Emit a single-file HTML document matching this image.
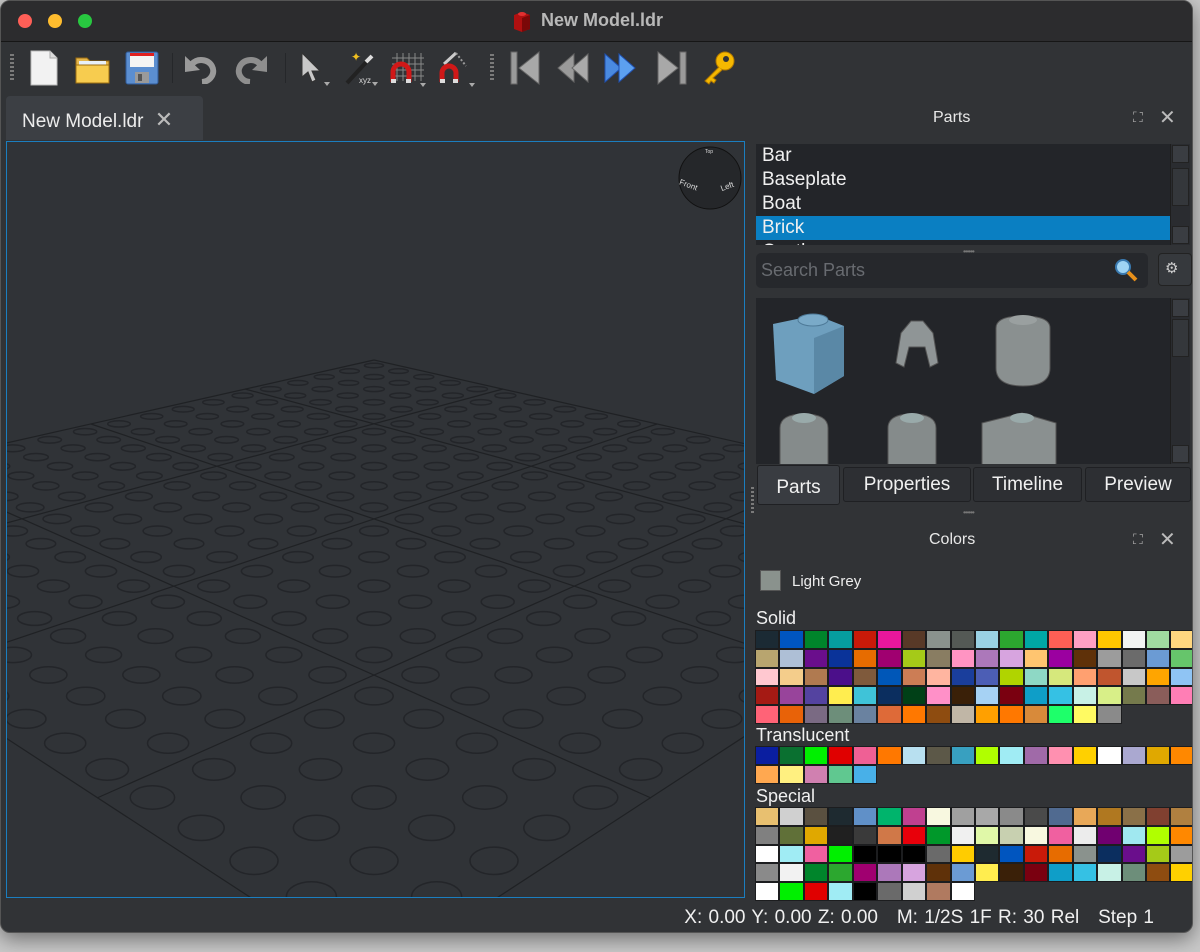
<!DOCTYPE html>
<html><head><meta charset="utf-8"><style>
*{margin:0;padding:0;box-sizing:border-box}
body{width:1200px;height:952px;background:#c9c9c9;font-family:"Liberation Sans",sans-serif;position:relative;overflow:hidden}
.win{position:absolute;left:0;top:0;width:1193px;height:933px;background:#313336;border-radius:10px;overflow:hidden;box-shadow:0 6px 20px rgba(0,0,0,.45);border:1px solid #555}
.abs{position:absolute}
.title{left:0;top:0;width:1193px;height:41px;background:#2c2c2e;border-bottom:1px solid #161616}
.tl{width:14px;height:14px;border-radius:50%;top:13px}
.ttext{left:540px;top:9px;font-size:18px;font-weight:bold;color:#b8b8b8}
.grip{width:4px;background:repeating-linear-gradient(#7a7a7a 0 2px,transparent 2px 4px)}
.tab{left:5px;top:95px;width:197px;height:44px;background:#3c3f44;border-radius:4px 4px 0 0;color:#ececec;font-size:19px;padding:11px 0 0 16px}
.vp{left:5px;top:140px;width:739px;height:757px;border:1px solid #1b7ebf;background:#303337;overflow:hidden}
.hdr{color:#e8e8e8;font-size:16px}
.list{left:755px;top:143px;width:414px;height:101px;background:#232529;overflow:hidden}
.list div{height:24px;font-size:19px;color:#f0f0f0;padding-left:6px;line-height:23px}
.sb{background:#2a2c30;border-left:1px solid #1e1e1e}
.sbb{position:absolute;left:1px;width:17px;height:18px;background:#3a3d42;border:1px solid #222}
.search{left:755px;top:252px;width:392px;height:35px;background:#26282c;border-radius:5px;color:#686b70;font-size:18px;padding:7px 0 0 5px}
.prev{left:755px;top:297px;width:414px;height:166px;background:#232529;overflow:hidden}
.ptab{top:466px;height:35px;background:#2d2f33;border:1px solid #1f2023;color:#f0f0f0;font-size:19px;text-align:center;padding-top:6px;border-radius:3px}
.grid{display:grid;grid-template-columns:repeat(18,24.45px);grid-auto-rows:18.8px;left:754px}
.grid i{display:block;border:1px solid #1c1d1f}
.lbl{left:755px;font-size:18px;color:#f0f0f0}
.status{right:38px;top:906px;font-size:19px;color:#f0f0f0;word-spacing:1px}
</style></head><body>
<div class="win">
<div class="abs title">
 <div class="abs tl" style="left:17px;background:#fe5f57"></div>
 <div class="abs tl" style="left:47px;background:#febc2e"></div>
 <div class="abs tl" style="left:77px;background:#28c840"></div>
 <svg class="abs" style="left:511px;top:8px" width="20" height="24"><polygon points="2,6 10,3 18,6 18,20 10,23 2,20" fill="#b01010"/><polygon points="10,9 18,6 18,20 10,23" fill="#7a0808"/><ellipse cx="10" cy="5" rx="4" ry="2" fill="#e03030"/></svg>
 <div class="abs ttext">New Model.ldr</div>
</div>
<div class="abs grip" style="left:9px;top:53px;height:26px"></div>
<svg class="abs" style="left:28px;top:49px" width="30" height="36"><path d="M2 1h19l7 7v27H2z" fill="#f2f2f2" stroke="#bbb"/><path d="M21 1v7h7" fill="#ddd" stroke="#aaa"/></svg>
<svg class="abs" style="left:74px;top:53px" width="36" height="30"><path d="M1 4h11l3 3h19v22H1z" fill="#e4b64c" stroke="#9a6b10"/><rect x="4" y="7" width="27" height="4" fill="#e8f0f8"/><rect x="1" y="11" width="33" height="18" fill="#f7cc4f" stroke="#a07010"/></svg>
<svg class="abs" style="left:124px;top:50px" width="34" height="34"><rect x="1" y="1" width="32" height="32" rx="2" fill="#5b8ed0" stroke="#2f5b99"/><rect x="5" y="2" width="24" height="14" fill="#f4f4f4"/><rect x="5" y="2" width="24" height="3" fill="#e02020"/><rect x="10" y="21" width="14" height="11" fill="#9a9a9a"/><rect x="13" y="23" width="4" height="7" fill="#555"/></svg>
<div class="abs" style="left:171px;top:52px;width:1px;height:30px;background:#25272a"></div>
<svg class="abs" style="left:183px;top:51px" width="36" height="32"><path d="M8 12 A12 11 0 1 1 18 30" fill="none" stroke="#9a9a9a" stroke-width="6"/><polygon points="1,4 1,20 16,18" fill="#9a9a9a"/></svg>
<svg class="abs" style="left:231px;top:51px" width="36" height="32"><path d="M28 12 A12 11 0 1 0 18 30" fill="none" stroke="#8e8e8e" stroke-width="6"/><polygon points="35,4 35,20 20,18" fill="#8e8e8e"/></svg>
<div class="abs" style="left:284px;top:52px;width:1px;height:30px;background:#25272a"></div>
<svg class="abs" style="left:298px;top:50px" width="34" height="36"><path d="M3 2 L3 26 L9 21 L13 31 L17 29 L13 20 L21 20 Z" fill="#c8c8c8" stroke="#333"/><polygon points="25,31 31,31 28,35" fill="#aaa"/></svg>
<svg class="abs" style="left:340px;top:48px" width="40" height="38"><line x1="6" y1="34" x2="30" y2="8" stroke="#222" stroke-width="4"/><line x1="25" y1="13" x2="31" y2="7" stroke="#ddd" stroke-width="4"/><text x="10" y="12" font-size="12" fill="#f0c020">✦</text><text x="18" y="34" font-size="8" fill="#ddd" font-family="Liberation Sans">xyz</text><polygon points="31,33 37,33 34,37" fill="#aaa"/></svg>
<svg class="abs" style="left:388px;top:49px" width="40" height="38"><g stroke="#888" stroke-width="1"><path d="M8 3v28M14 3v28M20 3v28M26 3v28M32 3v28M3 8h32M3 14h32M3 20h32M3 26h32"/></g><path d="M4 32 V22 A8 8 0 0 1 20 22 V32" fill="none" stroke="#d01818" stroke-width="5"/><rect x="2" y="29" width="5" height="4" fill="#ddd"/><rect x="17" y="29" width="5" height="4" fill="#ddd"/><polygon points="31,33 37,33 34,37" fill="#aaa"/></svg>
<svg class="abs" style="left:437px;top:49px" width="40" height="38"><path d="M18 3 L6 14" stroke="#ccc" stroke-width="3"/><path d="M18 3 L28 16" stroke="#999" stroke-width="2" stroke-dasharray="2 2"/><path d="M4 32 V23 A7 7 0 0 1 18 23 V32" fill="none" stroke="#d01818" stroke-width="5"/><rect x="2" y="29" width="5" height="4" fill="#ddd"/><rect x="15" y="29" width="5" height="4" fill="#ddd"/><polygon points="31,33 37,33 34,37" fill="#aaa"/></svg>
<div class="abs grip" style="left:489px;top:53px;height:26px"></div>
<svg class="abs" style="left:508px;top:49px" width="32" height="36"><rect x="2" y="2" width="6" height="32" fill="#9a9a9a" stroke="#666"/><polygon points="30,2 10,18 30,34" fill="#a8a8a8" stroke="#666"/></svg>
<svg class="abs" style="left:555px;top:49px" width="34" height="36"><polygon points="18,4 2,18 18,32" fill="#9a9a9a" stroke="#666"/><polygon points="32,4 16,18 32,32" fill="#aaa" stroke="#666"/></svg>
<svg class="abs" style="left:602px;top:49px" width="34" height="36"><polygon points="2,4 18,18 2,32" fill="#4a8ae0" stroke="#2050b0"/><polygon points="16,4 32,18 16,32" fill="#5ca0f0" stroke="#2050b0"/></svg>
<svg class="abs" style="left:655px;top:49px" width="32" height="36"><polygon points="2,2 22,18 2,34" fill="#a8a8a8" stroke="#666"/><rect x="24" y="2" width="6" height="32" fill="#9a9a9a" stroke="#666"/></svg>
<svg class="abs" style="left:700px;top:49px" width="36" height="36"><circle cx="24" cy="11" r="9" fill="#f5b800" stroke="#b07800"/><circle cx="25" cy="9" r="3" fill="#313336"/><path d="M18 17 L4 31 L8 34 L10 31 L13 33 L15 30 L12 28 L21 20" fill="#f5b800" stroke="#b07800"/></svg>
<div class="abs tab">New Model.ldr <span style="color:#bbb;margin-left:6px;font-size:22px">✕</span></div>
<div class="abs vp">
<svg id="floor" width="739" height="757" viewBox="5 140 739 757" style="position:absolute;left:-1px;top:-1px">
<g id="studs" fill="none" stroke="#232529" stroke-width="1.5"></g>
<g stroke="#1f2124" stroke-width="1.2">
<line x1="373" y1="359" x2="-331" y2="518"/><line x1="502" y1="388" x2="-228" y2="585"/><line x1="656" y1="423" x2="-92" y2="674"/><line x1="844" y1="465" x2="96" y2="797"/><line x1="1077" y1="518" x2="373" y2="977"/>
<line x1="373" y1="359" x2="1077" y2="518"/><line x1="244" y1="388" x2="974" y2="585"/><line x1="90" y1="423" x2="838" y2="674"/><line x1="-98" y1="465" x2="650" y2="797"/><line x1="-331" y1="518" x2="373" y2="977"/>
</g>
<circle cx="709" cy="177" r="31" fill="#25272a" stroke="#111" stroke-width="1"/>
<text x="678" y="186" font-size="8" fill="#ddd" transform="rotate(20 686 184)">Front</text>
<text x="719" y="188" font-size="8" fill="#ddd" transform="rotate(-20 726 184)">Left</text>
<text x="704" y="152" font-size="5" fill="#ddd">Top</text>
</svg>
</div>
<div class="abs hdr" style="left:932px;top:108px">Parts</div>
<div class="abs" style="left:1132px;top:108px;color:#aaa;font-size:14px">⛶</div>
<div class="abs" style="left:1158px;top:104px;color:#bbb;font-size:20px">✕</div>
<div class="abs list"><div>Bar</div><div>Baseplate</div><div>Boat</div><div style="background:#0a7fc2">Brick</div><div>Castle</div></div>
<div class="abs sb" style="left:1169px;top:143px;width:20px;height:101px"><div class="sbb" style="top:1px"></div><div class="sbb" style="top:24px;height:38px;background:#34373b"></div><div class="sbb" style="top:82px"></div></div>
<div class="abs" style="left:962px;top:246px;color:#777;font-size:8px;letter-spacing:-1px">••••••</div>
<div class="abs search">Search Parts</div>
<svg class="abs" style="left:1112px;top:256px" width="26" height="26"><circle cx="10" cy="10" r="7" fill="#9fd4f4" stroke="#3a7ab0" stroke-width="2"/><line x1="15" y1="15" x2="23" y2="23" stroke="#e8901a" stroke-width="4"/></svg>
<div class="abs" style="left:1157px;top:252px;width:34px;height:33px;background:#36393d;border:1px solid #222;border-radius:4px;color:#ccc;font-size:15px;padding:5px 0 0 6px">⚙</div>
<div class="abs prev">
<svg width="414" height="166">
<polygon points="17,26 60,17 88,28 88,78 58,96 20,82" fill="#6e9fbe"/><polygon points="58,40 88,28 88,78 58,96" fill="#5a88a6"/><ellipse cx="57" cy="22" rx="15" ry="6" fill="#7aaac8" stroke="#4e7a98"/>
<path d="M145 35 l10 -12 h12 l10 12 l5 30 l-8 4 l-5 -20 h-16 l-5 20 l-8 -4z" fill="#8f9596" stroke="#555"/>
<path d="M240 30 q0 -12 27 -12 q27 0 27 12 v40 q0 18 -27 18 q-27 0 -27 -18z" fill="#8a9090" stroke="#555"/><ellipse cx="267" cy="22" rx="14" ry="5" fill="#9aa0a0"/>
<path d="M24 130 q0 -14 24 -14 q24 0 24 14 v40 h-48z" fill="#858b8b" stroke="#555"/><ellipse cx="48" cy="120" rx="12" ry="5" fill="#9aa"/>
<path d="M132 130 q0 -14 24 -14 q24 0 24 14 v40 h-48z" fill="#858b8b" stroke="#555"/><ellipse cx="156" cy="120" rx="12" ry="5" fill="#9aa"/>
<path d="M226 125 l40 -10 l34 10 v45 h-74z" fill="#8a9090" stroke="#555"/><ellipse cx="266" cy="120" rx="12" ry="5" fill="#9aa"/>
</svg></div>
<div class="abs sb" style="left:1169px;top:297px;width:20px;height:166px"><div class="sbb" style="top:1px"></div><div class="sbb" style="top:21px;height:38px;background:#34373b"></div><div class="sbb" style="top:147px"></div></div>
<div class="abs grip" style="left:750px;top:486px;height:26px;width:3px"></div>
<div class="abs ptab" style="left:756px;top:464px;width:83px;height:40px;background:#393c41;padding-top:11px">Parts</div>
<div class="abs ptab" style="left:842px;width:128px">Properties</div>
<div class="abs ptab" style="left:972px;width:109px">Timeline</div>
<div class="abs ptab" style="left:1084px;width:106px">Preview</div>
<div class="abs" style="left:962px;top:507px;color:#777;font-size:8px;letter-spacing:-1px">••••••</div>
<div class="abs hdr" style="left:928px;top:530px">Colors</div>
<div class="abs" style="left:1132px;top:530px;color:#aaa;font-size:14px">⛶</div>
<div class="abs" style="left:1158px;top:526px;color:#bbb;font-size:20px">✕</div>
<div class="abs" style="left:759px;top:569px;width:21px;height:21px;background:#8a928d;border:1px solid #555"></div>
<div class="abs" style="left:791px;top:572px;font-size:15px;color:#eee">Light Grey</div>
<div class="abs lbl" style="top:607px">Solid</div>
<div class="abs grid" style="top:629px">
<i style="background:#1b2a34"></i><i style="background:#0055bf"></i><i style="background:#00852b"></i><i style="background:#069d9f"></i><i style="background:#c91a09"></i><i style="background:#e9179c"></i><i style="background:#583927"></i><i style="background:#8a928d"></i><i style="background:#545955"></i><i style="background:#9ad1e3"></i><i style="background:#2ca72f"></i><i style="background:#00a7a5"></i><i style="background:#fe5f55"></i><i style="background:#fe9fc3"></i><i style="background:#ffc700"></i><i style="background:#f2f3f2"></i><i style="background:#a0dba0"></i><i style="background:#ffd67f"></i>
<i style="background:#b8a56f"></i><i style="background:#aebfd6"></i><i style="background:#6a0e8c"></i><i style="background:#0a3399"></i><i style="background:#e76c00"></i><i style="background:#a00070"></i><i style="background:#a5ca18"></i><i style="background:#897d62"></i><i style="background:#ff94c2"></i><i style="background:#ac78ba"></i><i style="background:#d7a4df"></i><i style="background:#ffc570"></i><i style="background:#9b00a0"></i><i style="background:#5f3109"></i><i style="background:#9c9c9c"></i><i style="background:#6b6b6b"></i><i style="background:#6b9bd4"></i><i style="background:#66c56b"></i>
<i style="background:#ffc8d0"></i><i style="background:#f4cd8b"></i><i style="background:#b07a50"></i><i style="background:#4b0f8a"></i><i style="background:#7f5a3c"></i><i style="background:#0057b8"></i><i style="background:#cc7d55"></i><i style="background:#ffb5a0"></i><i style="background:#1a3e9c"></i><i style="background:#4c5eb5"></i><i style="background:#b0d400"></i><i style="background:#8ed8c5"></i><i style="background:#d6e87c"></i><i style="background:#ffa070"></i><i style="background:#c0552e"></i><i style="background:#c8c8c8"></i><i style="background:#ffa500"></i><i style="background:#8fc4f4"></i>
<i style="background:#a51a14"></i><i style="background:#98449b"></i><i style="background:#5443a0"></i><i style="background:#ffed4f"></i><i style="background:#3fc3d8"></i><i style="background:#0b2e5f"></i><i style="background:#004017"></i><i style="background:#ff90c8"></i><i style="background:#3a2008"></i><i style="background:#a6d2f4"></i><i style="background:#7a0010"></i><i style="background:#0f9ec8"></i><i style="background:#35c1e4"></i><i style="background:#c8f1e6"></i><i style="background:#d8ef88"></i><i style="background:#757a4c"></i><i style="background:#8a5d5a"></i><i style="background:#ff7eb5"></i>
<i style="background:#ff6377"></i><i style="background:#e86208"></i><i style="background:#7a6a83"></i><i style="background:#6d8e7a"></i><i style="background:#6a82a0"></i><i style="background:#de6a38"></i><i style="background:#ff7800"></i><i style="background:#8e4c10"></i><i style="background:#c0b6a6"></i><i style="background:#ffa000"></i><i style="background:#ff7800"></i><i style="background:#d88a3a"></i><i style="background:#1eff6a"></i><i style="background:#fffa62"></i><i style="background:#8a8a8a"></i>
</div>
<div class="abs lbl" style="top:724px">Translucent</div>
<div class="abs grid" style="top:745px">
<i style="background:#0a1ea0"></i><i style="background:#0a7030"></i><i style="background:#00f000"></i><i style="background:#e00000"></i><i style="background:#ef6095"></i><i style="background:#ff7800"></i><i style="background:#b8e0f0"></i><i style="background:#5c5848"></i><i style="background:#38a0c0"></i><i style="background:#b0ff00"></i><i style="background:#a0ecf4"></i><i style="background:#a06aa8"></i><i style="background:#ff90b0"></i><i style="background:#ffd000"></i><i style="background:#ffffff"></i><i style="background:#aaa8d0"></i><i style="background:#e0a800"></i><i style="background:#ff8800"></i>
<i style="background:#ffa850"></i><i style="background:#fff080"></i><i style="background:#d080b0"></i><i style="background:#60c890"></i><i style="background:#48b0e8"></i>
</div>
<div class="abs lbl" style="top:785px">Special</div>
<div class="abs grid" style="top:806px">
<i style="background:#e8c070"></i><i style="background:#d0d0d0"></i><i style="background:#5a5040"></i><i style="background:#1e2a30"></i><i style="background:#6090c8"></i><i style="background:#00b46c"></i><i style="background:#c04090"></i><i style="background:#f8f8e0"></i><i style="background:#a0a0a0"></i><i style="background:#a8a8a8"></i><i style="background:#8a8a8a"></i><i style="background:#4a4a4a"></i><i style="background:#506a90"></i><i style="background:#e8a858"></i><i style="background:#b07820"></i><i style="background:#8a7048"></i><i style="background:#804030"></i><i style="background:#b08040"></i>
<i style="background:#808080"></i><i style="background:#607038"></i><i style="background:#e0a800"></i><i style="background:#202020"></i><i style="background:#3a3a3a"></i><i style="background:#d07848"></i><i style="background:#e8000a"></i><i style="background:#00982a"></i><i style="background:#f0f0f0"></i><i style="background:#e0f8a8"></i><i style="background:#c8d0b0"></i><i style="background:#f8f8e0"></i><i style="background:#f060a0"></i><i style="background:#ececec"></i><i style="background:#700070"></i><i style="background:#a0e8f0"></i><i style="background:#b0ff00"></i><i style="background:#ff8800"></i>
<i style="background:#ffffff"></i><i style="background:#a0ecf4"></i><i style="background:#f060a0"></i><i style="background:#00f000"></i><i style="background:#000000"></i><i style="background:#000000"></i><i style="background:#000000"></i><i style="background:#6a6a6a"></i><i style="background:#ffcc00"></i><i style="background:#1e2a30"></i><i style="background:#0055bf"></i><i style="background:#c91a09"></i><i style="background:#e76c00"></i><i style="background:#8a928d"></i><i style="background:#0b2e5f"></i><i style="background:#6a0e8c"></i><i style="background:#a5ca18"></i><i style="background:#9c9c9c"></i>
<i style="background:#8a8a8a"></i><i style="background:#f2f2f2"></i><i style="background:#00852b"></i><i style="background:#2ca72f"></i><i style="background:#a00070"></i><i style="background:#ac78ba"></i><i style="background:#d7a4df"></i><i style="background:#5f3109"></i><i style="background:#6b9bd4"></i><i style="background:#ffed4f"></i><i style="background:#3a2008"></i><i style="background:#7a0010"></i><i style="background:#0f9ec8"></i><i style="background:#35c1e4"></i><i style="background:#c8f1e6"></i><i style="background:#6d8e7a"></i><i style="background:#8e4c10"></i><i style="background:#ffd000"></i>
<i style="background:#ffffff"></i><i style="background:#00f000"></i><i style="background:#e00000"></i><i style="background:#a0ecf4"></i><i style="background:#000000"></i><i style="background:#6a6a6a"></i><i style="background:#d0d0d0"></i><i style="background:#b07a60"></i><i style="background:#ffffff"></i>
</div>
<div class="abs status">X: 0.00 Y: 0.00 Z: 0.00 &nbsp; M: 1/2S 1F R: 30 Rel &nbsp; Step 1</div>
</div>
<script>
(function(){var g=document.getElementById('studs'),s='';
for(var i=0;i<20;i++)for(var m=0;m<20;m++){var u=(i+.5)/5,v=(m+.5)/5,k=u+v,j=u-v;var w=1/(0.00844-0.00069*k);var x=373+j*w,y=32+2.76*w;if(y>910||x<-30||x>780)continue;var rx=0.08*w,ry=2.76*0.00069*w*w*0.08;
s+='<ellipse cx="'+x.toFixed(1)+'" cy="'+y.toFixed(1)+'" rx="'+rx.toFixed(1)+'" ry="'+ry.toFixed(1)+'"/>';}
g.innerHTML=s;})();
</script>
</body></html>
